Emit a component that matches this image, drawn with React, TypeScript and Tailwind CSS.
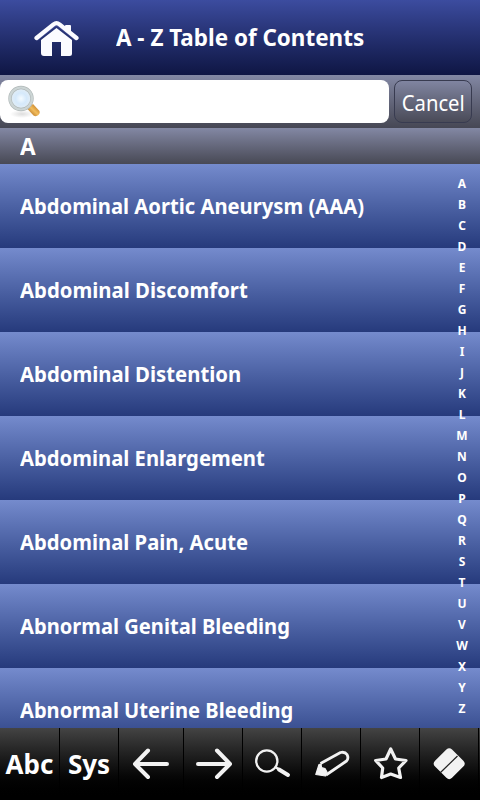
import React from "react";

const topics = [
  { name: "Abdominal Aortic Aneurysm (AAA)", fit: "scale-x-[0.918]" },
  { name: "Abdominal Discomfort", fit: "scale-x-[0.924]" },
  { name: "Abdominal Distention", fit: "scale-x-[0.924]" },
  { name: "Abdominal Enlargement", fit: "scale-x-[0.920]" },
  { name: "Abdominal Pain, Acute", fit: "scale-x-[0.920]" },
  { name: "Abnormal Genital Bleeding", fit: "scale-x-[0.915]" },
  { name: "Abnormal Uterine Bleeding", fit: "scale-x-[0.914]" },
];

const letters = "ABCDEFGHIJKLMNOPQRSTUVWXYZ".split("");

function HomeIcon() {
  return (
    <svg className="ml-[34px] h-[38px] w-[46px] shrink-0" viewBox="34 18 46 38" fill="#fbfbff">
      <path d="M41 39 56.500 27 72 39V52.500Q72 55 69.500 55H61V41H52V55H44Q41 55 41 52Z" />
      <path d="M36.500 38 53.500 24.500Q56.500 22.200 59.500 24.500L76.500 38" fill="none" stroke="#4a539a" strokeWidth="3.800" />
      <path d="M65 24.500Q65 24 66 24H70Q71 24 71 25V34L65 30Z" />
      <path d="M36.500 37 53.500 23.300Q56.500 21 59.500 23.300L76.500 37" fill="none" stroke="#fbfbff" strokeWidth="4.200" strokeLinecap="round" strokeLinejoin="round" />
    </svg>
  );
}

function LensIcon() {
  return (
    <svg className="ml-[5px] h-[38px] w-[38px]" viewBox="5 82 38 38">
      <defs>
        <radialGradient id="glass">
          <stop offset="0" stopColor="#f4fbff" />
          <stop offset="0.5" stopColor="#d5e9fb" />
          <stop offset="1" stopColor="#e5eef4" />
        </radialGradient>
        <radialGradient id="shade">
          <stop offset="0" stopColor="#ddd" />
          <stop offset="1" stopColor="#fff" />
        </radialGradient>
        <linearGradient id="handle" x1="0" y1="1" x2="1" y2="0">
          <stop offset="0.1" stopColor="#a8651c" />
          <stop offset="0.5" stopColor="#f2bd5c" />
          <stop offset="0.9" stopColor="#b9701d" />
        </linearGradient>
      </defs>
      <ellipse cx="22" cy="113" rx="12" ry="4" fill="url(#shade)" />
      <path d="m28 104 3 3" stroke="#8e9290" strokeWidth="4" />
      <path d="m27 107.500 6-4.500 6.500 7q1 2-1 4-2.500 2-5 .5Z" fill="url(#handle)" />
      <circle cx="21" cy="97.500" r="11" fill="url(#glass)" stroke="#b0b8b8" strokeWidth="3.400" />
      <circle cx="21" cy="97.500" r="11" fill="none" stroke="#ccd5d5" strokeWidth="2.200" />
    </svg>
  );
}

function Tool({ width, children }: { width: string; children: React.ReactNode }) {
  return (
    <div className={`${width} flex h-full shrink-0 items-center justify-center border-r border-black`}>
      {children}
    </div>
  );
}

const glyph = "h-[72px] w-full";

export default function App() {
  return (
    <div className="flex h-[800px] w-[480px] flex-col overflow-hidden bg-black font-['Noto_Sans',sans-serif] text-white">
      <header className="flex h-[75px] shrink-0 items-center bg-linear-to-b from-[#3c4c9f] to-[#0f1644]">
        <HomeIcon />
        <h1 className="ml-9 origin-left scale-x-[0.935] pb-px text-[24px] font-bold whitespace-nowrap">A - Z Table of Contents</h1>
      </header>

      <div className="flex h-[53px] shrink-0 items-center bg-linear-to-b from-[#8388a4] to-[#464754]">
        <div className="flex h-[43px] w-[389px] items-center rounded-lg bg-white">
          <LensIcon />
        </div>
        <button className="ml-[5px] flex h-[43px] w-[78px] items-center justify-center rounded-lg border border-[#383b50] bg-linear-to-b from-[#8085a1] to-[#4a4b58] pt-0.5 text-[22px]">
          <span className="scale-x-[0.92]">Cancel</span>
        </button>
      </div>

      <div className="flex h-9 shrink-0 items-center bg-linear-to-b from-[#8388a4] to-[#484955] pl-5 text-[24px] font-bold">
        <span className="origin-left scale-x-[0.94]">A</span>
      </div>

      <main className="relative h-[564px] shrink-0 overflow-hidden">
        {topics.map(({ name, fit }) => (
          <div key={name} className="flex h-[84px] items-center bg-linear-to-b from-[#758bcd] to-[#263a7c] pb-0.5 pl-5 text-[22px] font-bold whitespace-nowrap">
            <span className={`origin-left ${fit}`}>{name}</span>
          </div>
        ))}
        <nav className="absolute top-[9px] right-[8px] flex w-5 flex-col items-center text-[12px] leading-[21px] font-bold">
          {letters.map((l) => (
            <span key={l}>{l}</span>
          ))}
        </nav>
      </main>

      <footer className="flex h-[72px] shrink-0 bg-linear-to-b from-[#444] to-black text-[26px] font-bold">
        <Tool width="w-[60px]">Abc</Tool>
        <Tool width="w-[59px]">Sys</Tool>
        <Tool width="w-[65px]">
          <svg className={glyph} viewBox="119 728 64 72" fill="none" stroke="#f2f2f2" strokeWidth="4" strokeLinecap="round" strokeLinejoin="round">
            <path d="M167 764H135M148 750.500 135 764 148 777" />
          </svg>
        </Tool>
        <Tool width="w-[59px]">
          <svg className={glyph} viewBox="184 728 58 72" fill="none" stroke="#f2f2f2" strokeWidth="4" strokeLinecap="round" strokeLinejoin="round">
            <path d="M198 764H230M217 750.500 230 764 217 777" />
          </svg>
        </Tool>
        <Tool width="w-[59px]">
          <svg className={glyph} viewBox="243 728 58 72" fill="none" stroke="#f2f2f2" strokeLinecap="round">
            <circle cx="266.800" cy="761" r="10.600" strokeWidth="2.300" />
            <path d="m276 767.500 2 1.300" strokeWidth="2.500" />
            <path d="m279 769.500 9 5.500" strokeWidth="4" />
          </svg>
        </Tool>
        <Tool width="w-[59px]">
          <svg className={glyph} viewBox="302 728 58 72" fill="none" stroke="#f2f2f2" strokeWidth="2.800" strokeLinejoin="round">
            <path d="m320.500 763.500 20-11q4.500-1 6.500 2 2 4-.5 6.500L326 775" />
            <path d="M319 764.500 315.800 774.500 325.500 776 327 772 325 768.500 321.500 767.500 321 764Z" fill="#f2f2f2" strokeWidth="1.200" />
          </svg>
        </Tool>
        <Tool width="w-[59px]">
          <svg className={glyph} viewBox="361 728 58 72" fill="none" stroke="#f2f2f2" strokeWidth="3.200" strokeLinejoin="round">
            <path d="M390.700 749 395.500 759 406 760.500 398.700 768 400.500 777.500 390.700 774 381.500 777.500 382.700 768 375.700 760.500 386 759Z" />
          </svg>
        </Tool>
        <Tool width="w-[59px]">
          <svg className={glyph} viewBox="420 728 58 72">
            <rect x="437.200" y="751.700" width="24" height="24" rx="4" transform="rotate(45 449.200 763.700)" fill="#f2f2f2" />
            <path d="m440.500 772.500 17-16.500" stroke="#222" strokeWidth="1.200" />
          </svg>
        </Tool>
      </footer>
    </div>
  );
}
